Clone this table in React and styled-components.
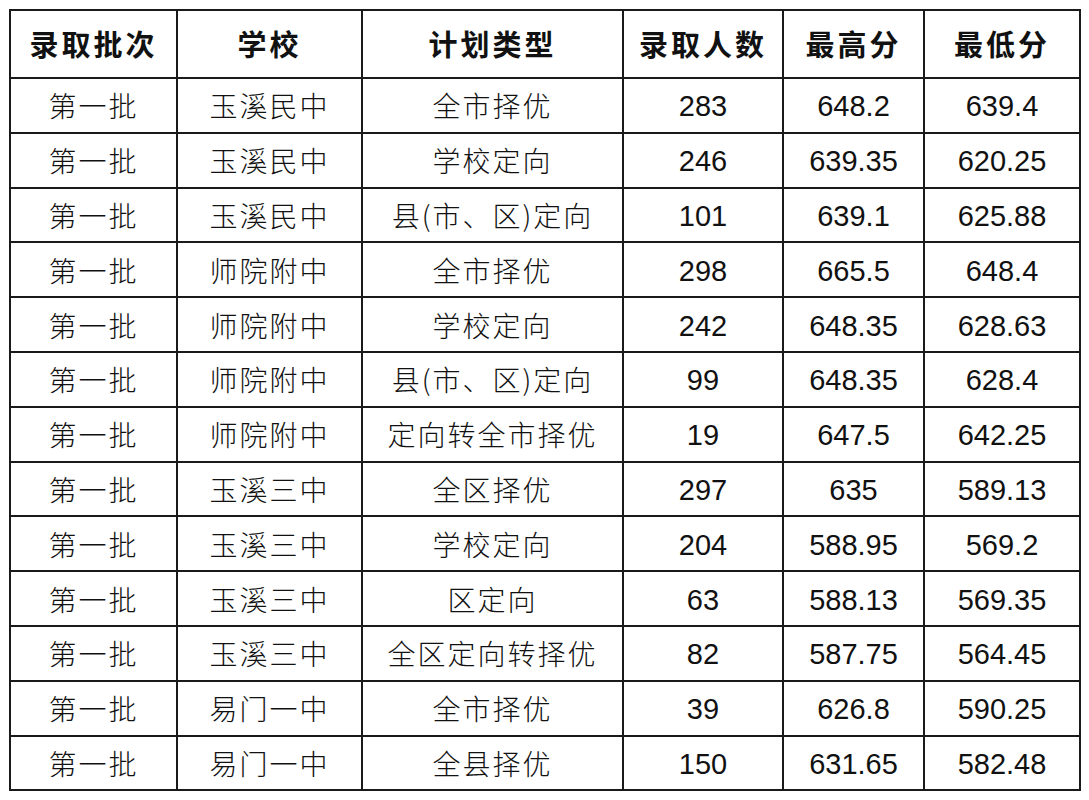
import React from "react";
import styled, { createGlobalStyle } from "styled-components";

const Global = createGlobalStyle`
  html, body { margin: 0; padding: 0; background: #fff; }
  body { font-family: "Liberation Sans", "Noto Sans CJK SC", sans-serif; }
`;

const Page = styled.div`
  padding: 9px 0 0 9px;
  width: 1089px;
  height: 800px;
  box-sizing: border-box;
  background: #fff;
`;

const Table = styled.table`
  border-collapse: collapse;
  table-layout: fixed;
  width: 1070px;
  color: #111;
`;

const Col = styled.col`
  width: ${(p) => p.$w}px;
`;

const Row = styled.tr`
  height: ${(p) => (p.$head ? 68 : 54.8)}px;
`;

const HeadCell = styled.th`
  border: 2px solid #1a1a1a;
  padding: 0 0 2px 0;
  line-height: 30px;
  font-family: "Noto Sans CJK SC", sans-serif;
  font-weight: 700;
  font-size: 29px;
  letter-spacing: 3px;
  text-align: center;
  vertical-align: middle;
`;

const Cell = styled.td`
  border: 2px solid #1a1a1a;
  padding: ${(p) => (p.$num ? "2px 0 0 0" : "0")};
  line-height: 30px;
  text-align: center;
  vertical-align: middle;
  font-size: ${(p) => (p.$num ? "29px" : "28px")};
  font-family: ${(p) =>
    p.$num
      ? '"Liberation Sans", Arial, sans-serif'
      : '"Noto Sans CJK SC", sans-serif'};
  font-weight: ${(p) => (p.$num ? 400 : 300)};
  letter-spacing: ${(p) => (p.$num ? "0" : "2px")};
`;

const widths = [167, 185, 261, 160, 141, 156];
const headers = ["录取批次", "学校", "计划类型", "录取人数", "最高分", "最低分"];

const rows = [
  ["第一批", "玉溪民中", "全市择优", "283", "648.2", "639.4"],
  ["第一批", "玉溪民中", "学校定向", "246", "639.35", "620.25"],
  ["第一批", "玉溪民中", "县(市、区)定向", "101", "639.1", "625.88"],
  ["第一批", "师院附中", "全市择优", "298", "665.5", "648.4"],
  ["第一批", "师院附中", "学校定向", "242", "648.35", "628.63"],
  ["第一批", "师院附中", "县(市、区)定向", "99", "648.35", "628.4"],
  ["第一批", "师院附中", "定向转全市择优", "19", "647.5", "642.25"],
  ["第一批", "玉溪三中", "全区择优", "297", "635", "589.13"],
  ["第一批", "玉溪三中", "学校定向", "204", "588.95", "569.2"],
  ["第一批", "玉溪三中", "区定向", "63", "588.13", "569.35"],
  ["第一批", "玉溪三中", "全区定向转择优", "82", "587.75", "564.45"],
  ["第一批", "易门一中", "全市择优", "39", "626.8", "590.25"],
  ["第一批", "易门一中", "全县择优", "150", "631.65", "582.48"],
];

export default function App() {
  return (
    <>
      <Global />
      <Page>
        <Table>
          <colgroup>
            {widths.map((w, i) => (
              <Col key={i} $w={w} />
            ))}
          </colgroup>
          <thead>
            <Row $head>
              {headers.map((h) => (
                <HeadCell key={h}>{h}</HeadCell>
              ))}
            </Row>
          </thead>
          <tbody>
            {rows.map((r, i) => (
              <Row key={i}>
                {r.map((c, j) => (
                  <Cell key={j} $num={j >= 3}>
                    {c}
                  </Cell>
                ))}
              </Row>
            ))}
          </tbody>
        </Table>
      </Page>
    </>
  );
}
